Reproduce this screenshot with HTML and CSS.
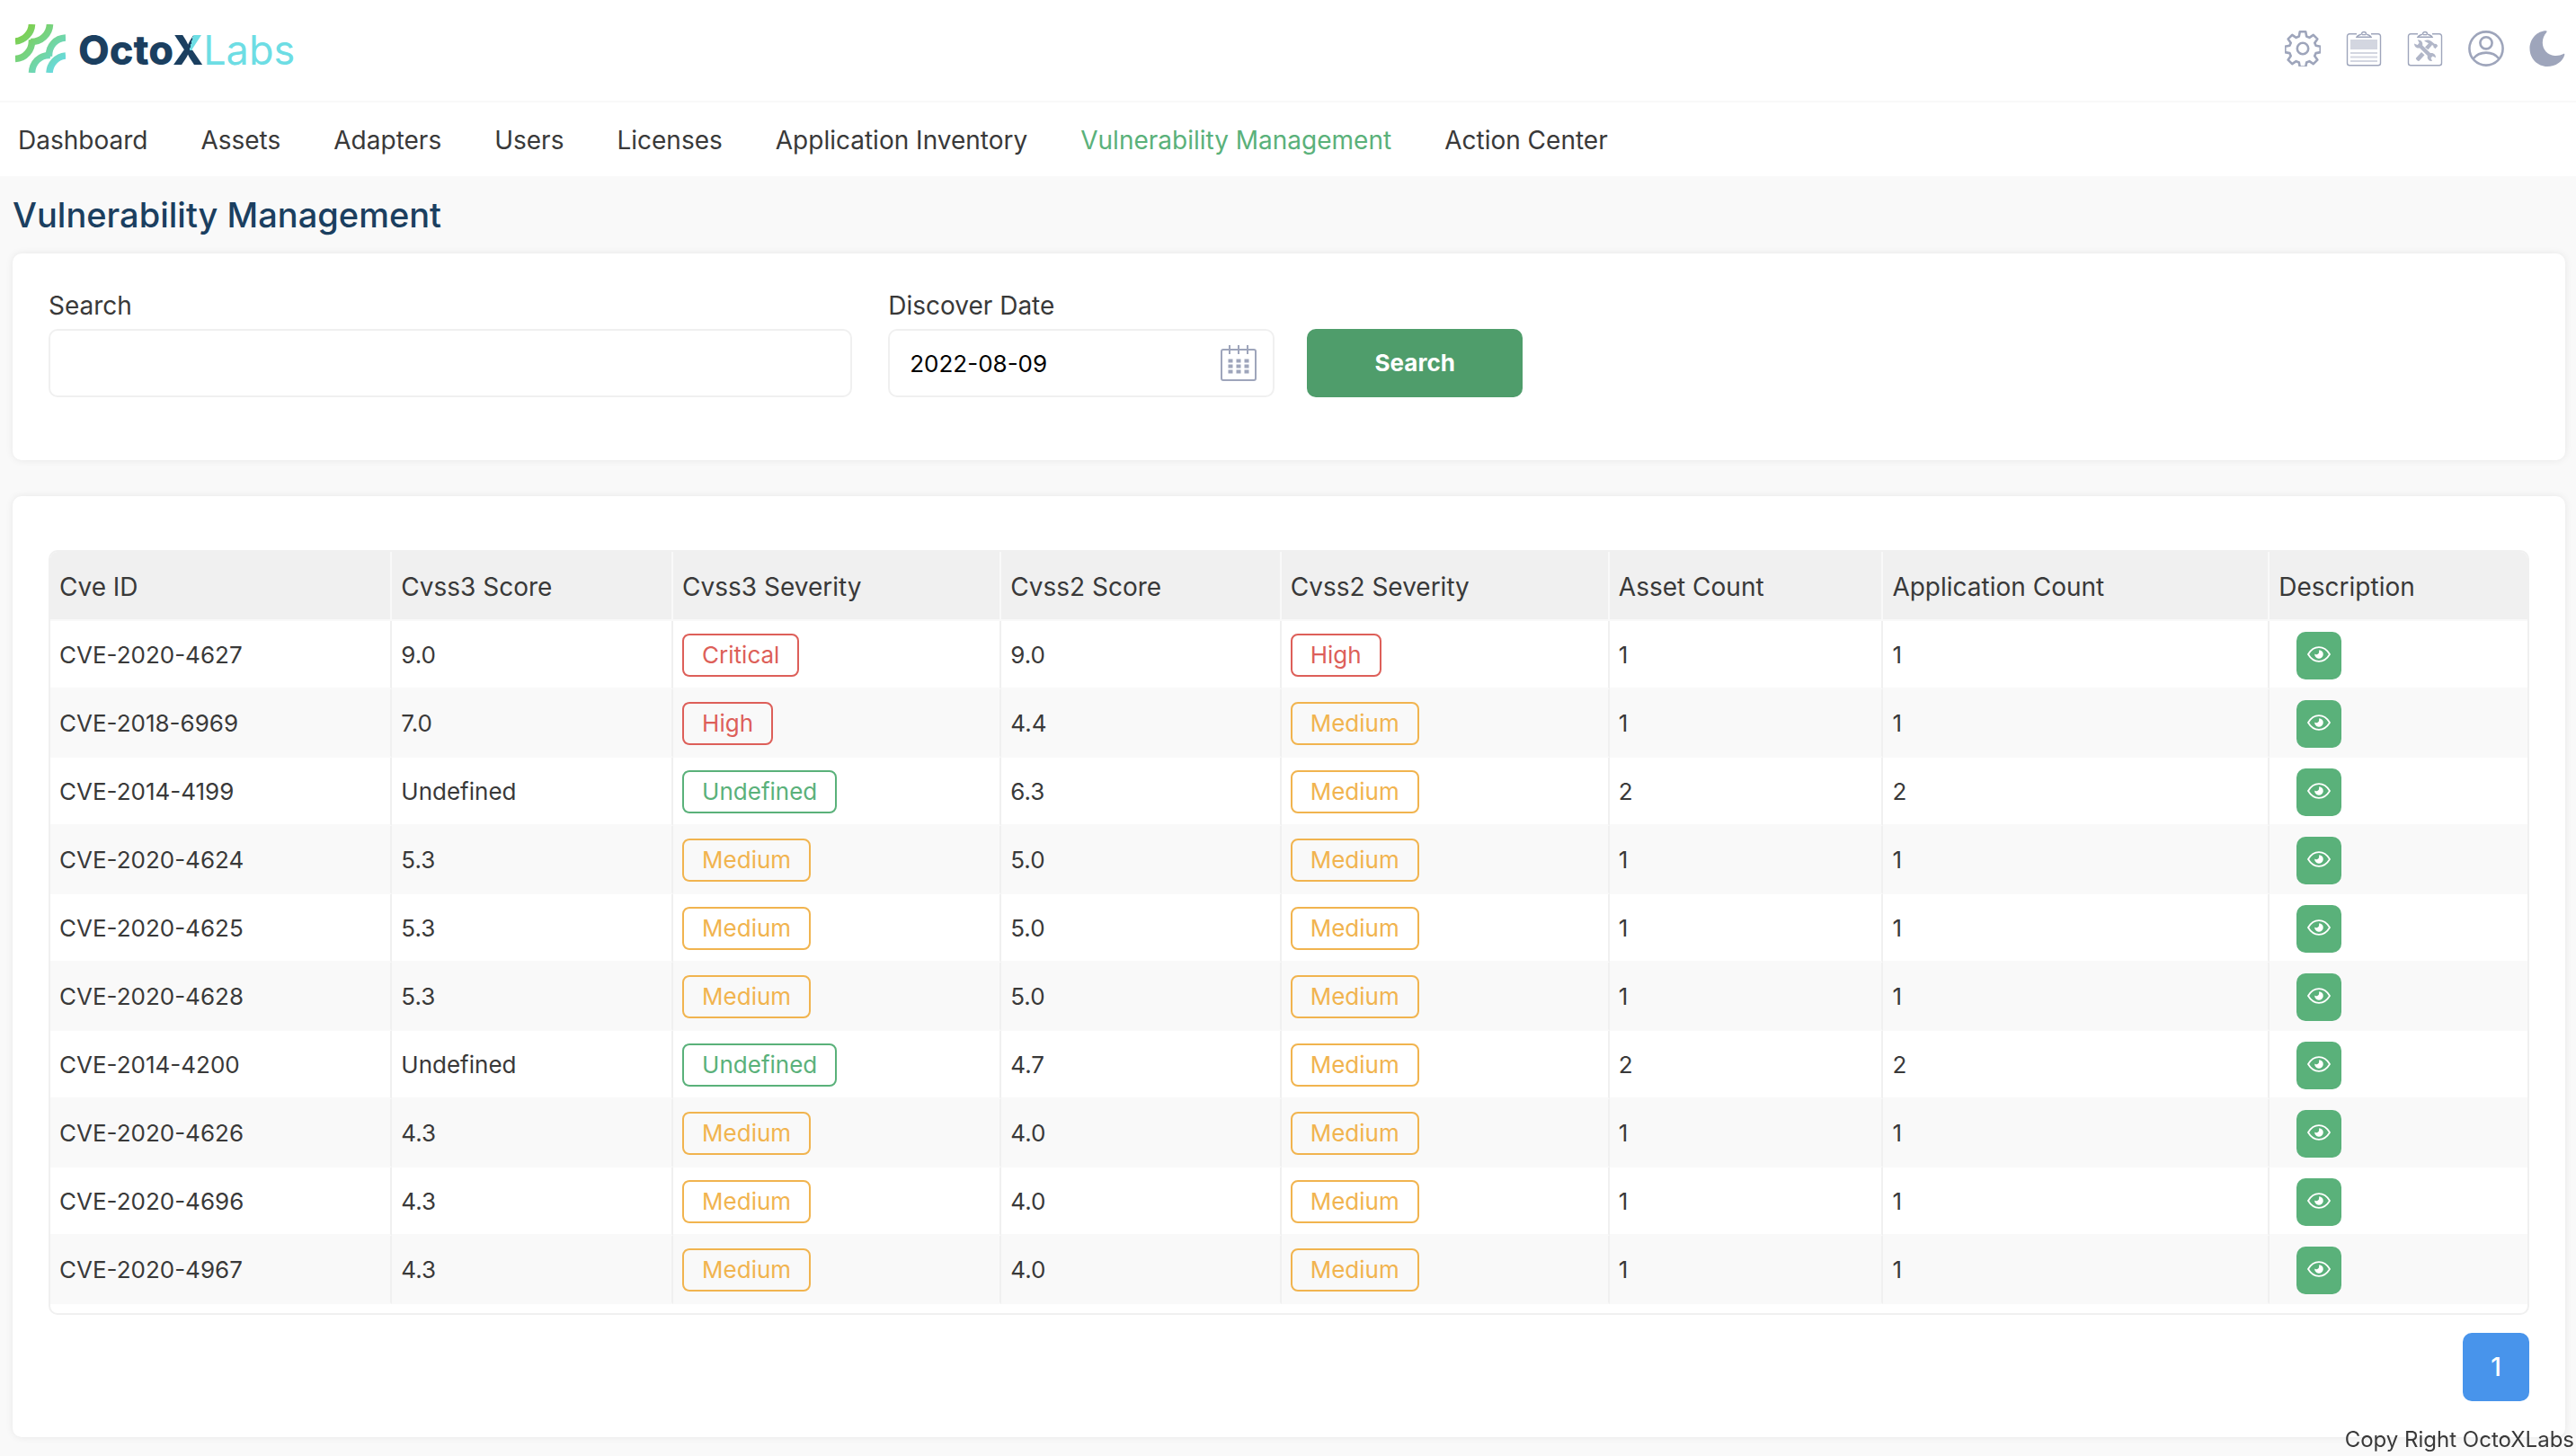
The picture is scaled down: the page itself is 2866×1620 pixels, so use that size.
FILE: index.html
```
<!DOCTYPE html>
<html lang="en">
<head>
    <meta charset="UTF-8">
    <meta name="viewport" content="width=device-width, initial-scale=1.0">
    <title>OctoXLabs - Vulnerability Management</title>
    <link rel="stylesheet" href="styles.css">
</head>
<body>
    <!-- Shared icons -->
    <svg class="sprite" aria-hidden="true">
        <symbol id="icon-eye" viewBox="0 0 26 18">
            <path d="M1 9C4 4 8 1.200 13 1.200S22 4 25 9C22 14 18 16.800 13 16.800S4 14 1 9Z" fill="none" stroke="currentColor" stroke-width="1.800" stroke-linejoin="round"/>
            <path d="M13.200 4.200a4.800 4.800 0 1 1-5 4.400c.6.6 1.600.8 2.500.6 1.300-.2 2.300-1.300 2.400-2.600.1-.9 0-1.700.1-2.400Z" fill="currentColor"/>
        </symbol>
    </svg>

    <!-- Top bar -->
    <header class="header">
        <a href="#" class="logo" aria-label="OctoXLabs">
            <svg class="logo-mark" viewBox="0 0 56 54" fill="none" stroke-width="7.600">
                <defs>
                    <linearGradient id="logoGradient" gradientUnits="userSpaceOnUse" x1="4" y1="4" x2="52" y2="52">
                        <stop offset="0" stop-color="#7fcf42"/>
                        <stop offset=".5" stop-color="#73d494"/>
                        <stop offset="1" stop-color="#66dcee"/>
                    </linearGradient>
                </defs>
                <g stroke="url(#logoGradient)">
                    <path d="M0 19C10 18 18 10 18.500 0"/>
                    <path d="M17 19.500C29 20 38 11 38.500 0"/>
                    <path d="M0 38.500C11 38 19 29 18.500 17"/>
                    <path d="M56 15C45 15.500 37 24 37.500 36"/>
                    <path d="M39 34.500C27 34 19 43 18.500 54"/>
                    <path d="M56 35C46 36 38.500 44 38 54"/>
                </g>
            </svg>
            <span class="logo-text"><b>Octo<span class="logo-x">X</span></b>Labs</span>
        </a>
        <div class="header-actions">
            <button type="button" class="icon-btn" aria-label="Settings">
                <svg viewBox="0 0 40 40" fill="none" stroke="currentColor" stroke-width="2.600" stroke-linejoin="round">
                    <path d="M16.800 1.300h6.400l1 5.200 3.200 1.400 4.400-3 4.500 4.500-3 4.400 1.300 3 5.100 1v6.300l-5.100 1-1.400 3.200 3.100 4.300-4.500 4.500-4.400-3-3.200 1.400-1 5.100h-6.400l-1-5.100-3.200-1.400-4.400 3-4.500-4.500 3-4.300-1.300-3.200-5.100-1v-6.300l5.100-1 1.300-3-3-4.400 4.500-4.500 4.400 3 3.200-1.400Z"/>
                    <circle cx="20" cy="20" r="6.200"/>
                </svg>
            </button>
            <button type="button" class="icon-btn" aria-label="Reports">
                <svg viewBox="0 0 40 40" fill="none" stroke="currentColor" stroke-width="1.400">
                    <path d="M12 3.800H4a2.500 2.500 0 0 0-2.500 2.500v30A2.500 2.500 0 0 0 4 38.800h32a2.500 2.500 0 0 0 2.500-2.500v-30A2.500 2.500 0 0 0 36 3.800h-8"/>
                    <path d="M12 7.200c1.500-2.600 4-2.400 5.500-3.200 0-3.400 5-3.400 5 0 1.500.8 4 .6 5.500 3.200ZM18 4.600h4"/>
                    <path d="M5 10h30v11H5zM5 24h30v2H5zM5 28.400h30v2H5zM5 33h30v2H5z" fill="currentColor" stroke="none" opacity=".45"/>
                </svg>
            </button>
            <button type="button" class="icon-btn" aria-label="Maintenance">
                <svg viewBox="0 0 40 40" fill="none" stroke="currentColor" stroke-width="1.400">
                    <path d="M12 3.800H4a2.500 2.500 0 0 0-2.500 2.500v30A2.500 2.500 0 0 0 4 38.800h32a2.500 2.500 0 0 0 2.500-2.500v-30A2.500 2.500 0 0 0 36 3.800h-8"/>
                    <path d="M12 7.200c1.500-2.600 4-2.400 5.500-3.200 0-3.400 5-3.400 5 0 1.500.8 4 .6 5.500 3.200ZM18 4.600h4"/>
                    <g stroke="none" fill="currentColor" opacity=".8">
                        <path d="m10 30.500 6-6.500 3.500 3.200-6 6.500c-1 1-4.500-2.200-3.500-3.200ZM20 18.500l4-4.300-5-2.600c2.500-1.700 6-1.400 8.500.6l3 2.500 2.200.4 1.600 1.800-2.800 3.300-2-1.600-.2-1.700-1.300-.8-4.500 5.200Z"/>
                        <path d="m8 14.500 3.600 1.400 2-2.200-1.800-3.400c3.500-.2 6.200 2.700 5.400 6.200l8.800 8.600c3.400-.8 6.200 1.800 6 5.200l-3.400-1.800-2.100 2 1.500 3.600c-3.600 0-6-2.800-5.200-6.200l-8.600-8.500c-3.200.8-6.200-1.500-6.200-4.900Z"/>
                    </g>
                </svg>
            </button>
            <button type="button" class="icon-btn" aria-label="Account">
                <svg viewBox="0 0 40 40" fill="none" stroke="currentColor" stroke-width="2.600">
                    <circle cx="20" cy="20" r="18.600"/>
                    <circle cx="20" cy="13.800" r="6.600"/>
                    <path d="M5.500 31.500C9 27 14 24.600 20 24.600S31 27 34.500 31.500"/>
                </svg>
            </button>
            <button type="button" class="icon-btn" aria-label="Dark mode">
                <svg viewBox="0 0 40 40" fill="currentColor">
                    <path d="M18.600.200C9 .200.500 9 .500 20c0 11 8.800 20 19.500 20 9.400 0 17.200-5.400 19.300-13 .2-1-.6-1.400-1.300-1-3 1.600-6.400 2.200-9.800 1.900C20.500 27.300 14.800 21 14.800 13.400c0-4.400 1.600-8.400 4.400-11.500.8-.9.400-1.700-.6-1.700Z"/>
                </svg>
            </button>
        </div>
    </header>

    <nav class="main-nav">
        <a href="#">Dashboard</a>
        <a href="#">Assets</a>
        <a href="#">Adapters</a>
        <a href="#">Users</a>
        <a href="#">Licenses</a>
        <a href="#">Application Inventory</a>
        <a href="#" class="active">Vulnerability Management</a>
        <a href="#">Action Center</a>
    </nav>

    <main class="main-content">
        <h1>Vulnerability Management</h1>

        <!-- Filters -->
        <form class="card filters">
            <div class="field field-search">
                <label for="search">Search</label>
                <input type="text" id="search">
            </div>
            <div class="field field-date">
                <label for="discoverDate">Discover Date</label>
                <div class="date-box">
                    <input type="text" id="discoverDate" value="2022-08-09">
                    <svg viewBox="0 0 40 40" fill="none" stroke="currentColor" aria-hidden="true">
                        <rect x="1" y="5" width="38" height="34" rx="2" stroke-width="2"/>
                        <path d="M10 0v10M20 0v10M30 0v10" stroke-width="2"/>
                        <path d="M8.500 17.500H32M8.500 23.500H32M8.500 29.500H32" stroke-width="4" stroke-dasharray="5 4"/>
                    </svg>
                </div>
            </div>
            <button type="submit" class="btn-search">Search</button>
        </form>

        <!-- Results -->
        <section class="card results">
            <div class="table-box">
                <table>
                    <colgroup>
                        <col class="col-id">
                        <col class="col-score3">
                        <col class="col-severity">
                        <col class="col-score2">
                        <col class="col-severity">
                        <col class="col-asset">
                        <col class="col-app">
                        <col>
                    </colgroup>
                    <thead>
                        <tr>
                            <th>Cve ID</th>
                            <th>Cvss3 Score</th>
                            <th>Cvss3 Severity</th>
                            <th>Cvss2 Score</th>
                            <th>Cvss2 Severity</th>
                            <th>Asset Count</th>
                            <th>Application Count</th>
                            <th>Description</th>
                        </tr>
                    </thead>
                    <tbody>
                        <tr>
                            <td>CVE-2020-4627</td>
                            <td>9.0</td>
                            <td><span class="badge red">Critical</span></td>
                            <td>9.0</td>
                            <td><span class="badge red">High</span></td>
                            <td>1</td>
                            <td>1</td>
                            <td><button type="button" class="btn-view" aria-label="View"><svg><use href="#icon-eye"/></svg></button></td>
                        </tr>
                        <tr>
                            <td>CVE-2018-6969</td>
                            <td>7.0</td>
                            <td><span class="badge red">High</span></td>
                            <td>4.4</td>
                            <td><span class="badge orange">Medium</span></td>
                            <td>1</td>
                            <td>1</td>
                            <td><button type="button" class="btn-view" aria-label="View"><svg><use href="#icon-eye"/></svg></button></td>
                        </tr>
                        <tr>
                            <td>CVE-2014-4199</td>
                            <td>Undefined</td>
                            <td><span class="badge green">Undefined</span></td>
                            <td>6.3</td>
                            <td><span class="badge orange">Medium</span></td>
                            <td>2</td>
                            <td>2</td>
                            <td><button type="button" class="btn-view" aria-label="View"><svg><use href="#icon-eye"/></svg></button></td>
                        </tr>
                        <tr>
                            <td>CVE-2020-4624</td>
                            <td>5.3</td>
                            <td><span class="badge orange">Medium</span></td>
                            <td>5.0</td>
                            <td><span class="badge orange">Medium</span></td>
                            <td>1</td>
                            <td>1</td>
                            <td><button type="button" class="btn-view" aria-label="View"><svg><use href="#icon-eye"/></svg></button></td>
                        </tr>
                        <tr>
                            <td>CVE-2020-4625</td>
                            <td>5.3</td>
                            <td><span class="badge orange">Medium</span></td>
                            <td>5.0</td>
                            <td><span class="badge orange">Medium</span></td>
                            <td>1</td>
                            <td>1</td>
                            <td><button type="button" class="btn-view" aria-label="View"><svg><use href="#icon-eye"/></svg></button></td>
                        </tr>
                        <tr>
                            <td>CVE-2020-4628</td>
                            <td>5.3</td>
                            <td><span class="badge orange">Medium</span></td>
                            <td>5.0</td>
                            <td><span class="badge orange">Medium</span></td>
                            <td>1</td>
                            <td>1</td>
                            <td><button type="button" class="btn-view" aria-label="View"><svg><use href="#icon-eye"/></svg></button></td>
                        </tr>
                        <tr>
                            <td>CVE-2014-4200</td>
                            <td>Undefined</td>
                            <td><span class="badge green">Undefined</span></td>
                            <td>4.7</td>
                            <td><span class="badge orange">Medium</span></td>
                            <td>2</td>
                            <td>2</td>
                            <td><button type="button" class="btn-view" aria-label="View"><svg><use href="#icon-eye"/></svg></button></td>
                        </tr>
                        <tr>
                            <td>CVE-2020-4626</td>
                            <td>4.3</td>
                            <td><span class="badge orange">Medium</span></td>
                            <td>4.0</td>
                            <td><span class="badge orange">Medium</span></td>
                            <td>1</td>
                            <td>1</td>
                            <td><button type="button" class="btn-view" aria-label="View"><svg><use href="#icon-eye"/></svg></button></td>
                        </tr>
                        <tr>
                            <td>CVE-2020-4696</td>
                            <td>4.3</td>
                            <td><span class="badge orange">Medium</span></td>
                            <td>4.0</td>
                            <td><span class="badge orange">Medium</span></td>
                            <td>1</td>
                            <td>1</td>
                            <td><button type="button" class="btn-view" aria-label="View"><svg><use href="#icon-eye"/></svg></button></td>
                        </tr>
                        <tr>
                            <td>CVE-2020-4967</td>
                            <td>4.3</td>
                            <td><span class="badge orange">Medium</span></td>
                            <td>4.0</td>
                            <td><span class="badge orange">Medium</span></td>
                            <td>1</td>
                            <td>1</td>
                            <td><button type="button" class="btn-view" aria-label="View"><svg><use href="#icon-eye"/></svg></button></td>
                        </tr>
                    </tbody>
                </table>
            </div>
            <div class="pagination">
                <button type="button" class="page-btn">1</button>
            </div>
        </section>
    </main>

    <footer class="footer">Copy Right OctoXLabs</footer>
</body>
</html>
```
FILE: styles.css
```
:root {
    --page-bg: #f9f9f9;
    --card-bg: #ffffff;
    --border-color: #f0f0f0;
    --text-primary: #393939;
    --navy: #1b3f60;
    --cyan: #6ddde4;
    --icon: #9ea5bb;
    --green: #5ab17a;
    --green-dark: #4f9d6b;
    --red: #dd5f59;
    --orange: #f1b44f;
    --blue: #4894eb;
    --shadow: 0 0 8px rgba(0, 0, 0, 0.08);
}

* {
    box-sizing: border-box;
}

body {
    margin: 0;
    min-height: 100vh;
    background-color: var(--page-bg);
    color: var(--text-primary);
    font-family: 'Inter', sans-serif;
    font-size: 26px;
    line-height: 32px;
}

button,
input {
    font: inherit;
}

.sprite {
    display: none;
}

/* Top bar */
.header {
    display: flex;
    justify-content: space-between;
    align-items: center;
    height: 114px;
    padding: 0 12px 4px 17px;
    background-color: var(--card-bg);
    border-bottom: 2px solid var(--page-bg);
}

.logo {
    display: flex;
    align-items: center;
    gap: 14px;
    color: var(--cyan);
    text-decoration: none;
}

.logo-mark {
    width: 56px;
    height: 54px;
}

.logo-text {
    padding-top: 4px;
    font-size: 45px;
    line-height: 54px;
}

.logo-text b {
    font-weight: 800;
    color: var(--navy);
}

/* Upper right arm of the X takes the accent colour */
.logo-x {
    background: conic-gradient(from 15deg at 55% 50%, var(--cyan) 0 75deg, var(--navy) 75deg);
    background-clip: text;
    -webkit-background-clip: text;
    color: transparent;
}

.header-actions {
    display: flex;
    gap: 28px;
}

.icon-btn {
    width: 40px;
    height: 40px;
    padding: 0;
    border: none;
    background: none;
    color: var(--icon);
    cursor: pointer;
}

.icon-btn svg {
    display: block;
    width: 40px;
    height: 40px;
}

/* Navigation */
.main-nav {
    display: flex;
    align-items: center;
    gap: 59px;
    height: 82px;
    padding: 2px 20px 0;
    background-color: var(--card-bg);
    font-size: 28px;
}

.main-nav a {
    color: var(--text-primary);
    text-decoration: none;
}

.main-nav a:hover,
.main-nav a.active {
    color: var(--green);
}

/* Content */
.main-content {
    padding: 21px 12px 21px 14px;
}

.main-content h1 {
    margin: 0 0 21px;
    color: var(--navy);
    font-size: 38px;
    font-weight: 500;
    line-height: 44px;
}

.card {
    background-color: var(--card-bg);
    border-radius: 10px;
    box-shadow: var(--shadow);
}

/* Filters */
.filters {
    display: flex;
    align-items: flex-end;
    padding: 42px 40px 70px;
    margin-bottom: 40px;
}

.field {
    display: flex;
    flex-direction: column;
    gap: 10px;
}

.field label {
    font-size: 28px;
}

.field input {
    width: 100%;
    height: 76px;
    padding: 0 22px;
    border: 2px solid var(--border-color);
    border-radius: 10px;
    background-color: var(--card-bg);
    color: #000000;
}

.field-search {
    flex: 0 0 32.4%;
    margin-right: 40px;
}

.field-date {
    flex: 0 0 430px;
    margin-right: 36px;
}

.date-box {
    position: relative;
}

.date-box svg {
    position: absolute;
    top: 18px;
    right: 20px;
    width: 40px;
    height: 40px;
    color: var(--icon);
}

.btn-search {
    width: 240px;
    height: 76px;
    border: none;
    border-radius: 10px;
    background-color: var(--green-dark);
    color: #ffffff;
    font-weight: 700;
    cursor: pointer;
}

/* Results */
.results {
    padding: 60px 40px 40px;
}

.table-box {
    padding-bottom: 10px;
    border: 2px solid var(--border-color);
    border-radius: 10px;
    overflow: hidden;
}

table {
    width: 100%;
    table-layout: fixed;
    border-collapse: separate;
    border-spacing: 0;
}

.col-id { width: 13.8%; }
.col-score3 { width: 11.35%; }
.col-severity { width: 13.25%; }
.col-score2 { width: 11.3%; }
.col-asset { width: 11.05%; }
.col-app { width: 15.6%; }

th,
td {
    height: 76px;
    padding: 2px 10px 0;
    border-right: 2px solid var(--border-color);
    border-bottom: 2px solid var(--page-bg);
    text-align: left;
    vertical-align: middle;
}

th {
    height: 77px;
    background-color: var(--border-color);
    border-right-color: var(--page-bg);
    font-size: 28px;
    font-weight: 400;
}

th:last-child,
td:last-child {
    border-right: none;
}

tbody tr:nth-child(even) {
    background-color: var(--page-bg);
}

.badge {
    display: inline-block;
    padding: 6px 20px;
    border: 2px solid currentColor;
    border-radius: 8px;
    vertical-align: middle;
}

.badge.red { color: var(--red); }
.badge.orange { color: var(--orange); }
.badge.green { color: var(--green); }

.btn-view {
    display: flex;
    justify-content: center;
    align-items: center;
    width: 50px;
    height: 53px;
    margin-left: 20px;
    padding: 0 0 3px;
    border: none;
    border-radius: 10px;
    background-color: var(--green);
    color: #ffffff;
    cursor: pointer;
}

.btn-view svg {
    width: 26px;
    height: 18px;
}

.pagination {
    display: flex;
    justify-content: flex-end;
    margin-top: 20px;
}

.page-btn {
    width: 74px;
    height: 76px;
    border: none;
    border-radius: 10px;
    background-color: var(--blue);
    color: #ffffff;
    font-size: 28px;
    font-weight: 500;
    cursor: pointer;
}

/* Copyright note stays over the bottom corner */
.footer {
    position: fixed;
    right: 2px;
    bottom: 2px;
    font-size: 24px;
}
```
